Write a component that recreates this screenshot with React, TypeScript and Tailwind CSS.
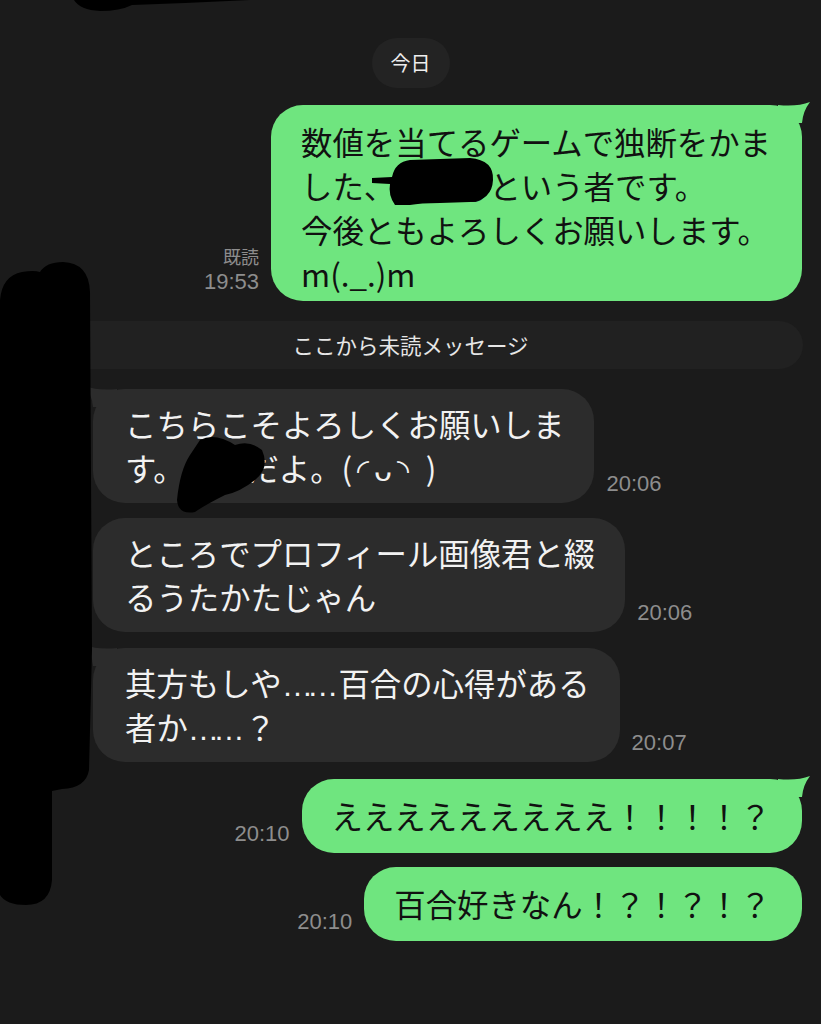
import React from 'react';

const jp = "font-['Noto_Sans_CJK_JP','Liberation_Sans',sans-serif]";
const num = "font-['Liberation_Sans',Arial,sans-serif]";

const GREEN = '#6fe57f';
const GRAY = '#2c2c2c';

const OutTail = () => (
  <svg viewBox="-24 -4 34 24" className="absolute -right-[10px] -top-[4px] w-[34px] h-[24px]">
    <path d="M-24,0 Q-5,2 8,-3 Q1,6 0,18 L-24,18 Z" fill={GREEN} />
  </svg>
);

const InTail = () => (
  <svg viewBox="-10 -4 34 24" className="absolute -left-[10px] -top-[4px] w-[34px] h-[24px]">
    <path d="M24,0 Q5,2 -8,-3 Q-1,6 0,18 L24,18 Z" fill={GRAY} />
  </svg>
);

// iOS-style baseline ellipsis
const Dots = () => (
  <span className={`${num} leading-none tracking-[-6px] pr-[6px]`}>……</span>
);

const Time = ({ children }: { children: React.ReactNode }) => (
  <span className={`${num} text-[22px] leading-none text-[#8d8d8d] mb-[8px] whitespace-nowrap`}>{children}</span>
);

const Out = ({ children, tail, time, read, cls, pad = 'py-[15px]' }: { children: React.ReactNode; tail?: boolean; time: string; read?: boolean; cls: string; pad?: string }) => (
  <div className={`flex justify-end items-end pr-[19px] gap-[12px] ${cls}`}>
    <div className="flex flex-col items-end">
      {read && <span className={`${jp} text-[18px] leading-[22px] text-[#8d8d8d] mb-[4px]`}>既読</span>}
      <Time>{time}</Time>
    </div>
    <div className={`relative bg-[#6fe57f] rounded-[32px] pl-[30px] pr-[31px] ${pad} ${jp} text-[31.4px] leading-[44px] text-[#111111] whitespace-nowrap`}>
      {tail && <OutTail />}
      {children}
    </div>
  </div>
);

const In = ({ children, tail, time, cls }: { children: React.ReactNode; tail?: boolean; time: string; cls: string }) => (
  <div className={`flex items-end pl-[93px] gap-[12px] ${cls}`}>
    <div className={`relative bg-[#2c2c2c] rounded-[32px] pl-[32px] pr-[30px] py-[13px] ${jp} text-[31.4px] leading-[44px] text-[#f2f2f2] whitespace-nowrap`}>
      {tail && <InTail />}
      {children}
    </div>
    <Time>{time}</Time>
  </div>
);

export default function App() {
  return (
    <div className="relative w-[821px] h-[1024px] bg-[#1b1b1b] overflow-hidden">
      <div className="flex flex-col pt-[38px]">
        <div className="flex justify-center">
          <div className={`${jp} w-[78px] h-[50px] rounded-full bg-[#232323] text-[#eeeeee] text-[20px] flex items-center justify-center`}>
            今日
          </div>
        </div>

        <Out cls="mt-[17px]" pad="pt-[15px] pb-[5px]" tail read time="19:53">
          数値を当てるゲームで独断をかま<br />
          した、〇〇〇という者です。<br />
          今後ともよろしくお願いします。<br />
          m(._.)m
        </Out>

        <div className={`mt-[20px] mx-[18px] h-[48px] rounded-full bg-[#212121] flex items-center justify-center ${jp} text-[21.5px] text-[#e6e6e6]`}>
          ここから未読メッセージ
        </div>

        <In cls="mt-[20px]" tail time="20:06">
          こちらこそよろしくお願いしま<br />
          す。〇〇だよ。<span className="tracking-[5px]">(◜ᴗ◝ )</span>
        </In>

        <In cls="mt-[15px]" time="20:06">
          ところでプロフィール画像君と綴<br />
          るうたかたじゃん
        </In>

        <In cls="mt-[16px]" tail time="20:07">
          其方もしや<Dots />百合の心得がある<br />
          者か<Dots />？
        </In>

        <Out cls="mt-[17px]" tail time="20:10">
          えええええええええ！！！！？
        </Out>

        <Out cls="mt-[14px]" time="20:10">
          百合好きなん！？！？！？
        </Out>
      </div>

      {/* redaction marks */}
      <svg className="absolute inset-0 w-[821px] h-[1024px] pointer-events-none" viewBox="0 0 821 1024">
        <path d="M74,0 Q80,10 100,11 Q120,11 132,5 Q190,3 250,0 Z" fill="#000" />
        <path d="M0,300 Q2,276 22,272 Q34,270 40,272 Q46,262 63,262 Q89,263 90,292 L92,650 L89,770 Q86,788 62,789 L52,791 L52,880 Q50,905 26,905 Q6,905 0,895 Z" fill="#000" />
        <path d="M372,178 L392,177 Q395,162 410,160 L470,158 Q494,160 493,180 Q492,200 470,202 L440,203 Q420,203 410,205 L395,205 Q388,195 390,184 L372,183 Z" fill="#000" />
        <path d="M200,440 Q215,432 235,445 Q250,440 262,450 Q270,468 255,480 Q240,492 225,495 Q205,505 195,512 Q178,515 177,500 Q180,470 190,455 Z" fill="#000" />
      </svg>
    </div>
  );
}
